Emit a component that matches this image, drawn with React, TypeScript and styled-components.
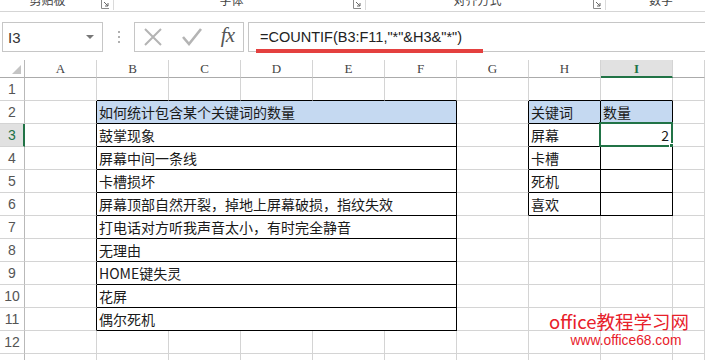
import React from 'react';
import styled, { createGlobalStyle } from 'styled-components';

const GREEN = '#217346';
const GRID = '#d4d4d4';
const BLUE = '#c5d9f1';

const GlobalStyle = createGlobalStyle`
  html, body {
    margin: 0;
    padding: 0;
    background: #fff;
    overflow: hidden;
  }
  body {
    font-family: "Liberation Sans", "Noto Sans CJK SC", sans-serif;
  }
`;

const Page = styled.div`
  position: relative;
  width: 705px;
  height: 360px;
  overflow: hidden;
  background: #fff;
`;

/* ribbon group captions, cut off at the top */
const Ribbon = styled.div`
  display: flex;
  height: 11px;
  border-bottom: 1px solid #d5d5d5;
  overflow: hidden;
`;

const RibbonGroup = styled.div<{ $width: number; $labelShift: number }>`
  position: relative;
  display: flex;
  justify-content: center;
  width: ${(p) => p.$width}px;
  flex-shrink: 0;
  border-right: 1px solid #dadada;
  height: 10px;
  span {
    font-family: "Noto Sans CJK SC", sans-serif;
    font-size: 12px;
    line-height: 12px;
    color: #444;
    margin-top: -6px;
    transform: translateX(${(p) => p.$labelShift}px);
  }
  svg {
    position: absolute;
    right: 3px;
    top: 0;
  }
`;

const Launcher = () => (
  <svg width="9" height="9" viewBox="0 0 9 9">
    <path d="M0.5 -1 V8.5 H8" fill="none" stroke="#8a8a8a" />
    <path d="M3 2 L7 6 M7 3 V6 H4" fill="none" stroke="#666" />
  </svg>
);

const FormulaBar = styled.div`
  display: flex;
  height: 30px;
  margin-top: 10px;
  padding-left: 2px;
`;

const NameBox = styled.div`
  position: relative;
  display: flex;
  align-items: center;
  width: 99px;
  border: 1px solid #c6c6c6;
  padding-left: 5px;
  box-sizing: border-box;
  width: 101px;
  font-family: "Liberation Sans", sans-serif;
  font-size: 15px;
  color: #333;
  &::after {
    content: '';
    position: absolute;
    right: 8px;
    top: 12px;
    border-left: 4px solid transparent;
    border-right: 4px solid transparent;
    border-top: 4px solid #777;
  }
`;

const Grip = styled.div`
  display: flex;
  flex-direction: column;
  justify-content: center;
  align-items: center;
  gap: 3px;
  width: 31px;
  i {
    display: block;
    width: 2px;
    height: 2px;
    background: #b0b0b0;
  }
`;

const ButtonBox = styled.div`
  display: flex;
  align-items: center;
  justify-content: space-between;
  width: 110px;
  box-sizing: border-box;
  border: 1px solid #c6c6c6;
  padding: 0 9px 0 8px;
`;

const Fx = styled.span`
  font-family: "Liberation Serif", serif;
  font-style: italic;
  font-size: 21px;
  color: #555;
  letter-spacing: -1px;
  margin-top: -3px;
`;

const FormulaInput = styled.div`
  position: relative;
  flex: 1;
  margin-left: 4px;
  display: flex;
  align-items: center;
  border: 1px solid #c6c6c6;
  border-right: none;
  padding-left: 11px;
  font-family: "Liberation Sans", sans-serif;
  font-size: 14.5px;
  color: #222;
`;

const Underline = styled.div`
  position: absolute;
  left: 7px;
  top: 26px;
  width: 227px;
  height: 4px;
  background: #e4403f;
`;

const Sheet = styled.div`
  display: grid;
  grid-template-columns: 25px repeat(9, 72px) 1fr;
  grid-template-rows: 18px repeat(13, 23px);
  margin-top: 8px;
`;

const Corner = styled.div`
  position: relative;
  border-right: 1px solid #b9b9b9;
  border-bottom: 1px solid #ababab;
  &::after {
    content: '';
    position: absolute;
    right: 3px;
    bottom: 3px;
    border-left: 9px solid transparent;
    border-bottom: 9px solid #c4c4c4;
  }
`;

const ColHead = styled.div<{ $active?: boolean }>`
  display: flex;
  align-items: center;
  justify-content: center;
  background: ${(p) => (p.$active ? '#e1e1e1' : '#fff')};
  border-right: 1px solid ${GRID};
  border-bottom: ${(p) => (p.$active ? `2px solid ${GREEN}` : '1px solid #ababab')};
  font-family: "Liberation Serif", serif;
  font-size: 13px;
  color: ${(p) => (p.$active ? GREEN : '#444')};
  font-weight: ${(p) => (p.$active ? 'bold' : 'normal')};
  padding-top: 1px;
`;

const RowHead = styled.div<{ $active?: boolean }>`
  display: flex;
  align-items: center;
  justify-content: center;
  background: ${(p) => (p.$active ? '#e1e1e1' : '#fff')};
  border-right: ${(p) => (p.$active ? `2px solid ${GREEN}` : '1px solid #b9b9b9')};
  border-bottom: 1px solid ${GRID};
  font-family: "Liberation Sans", sans-serif;
  font-size: 14px;
  color: ${(p) => (p.$active ? GREEN : '#555')};
  padding-left: ${(p) => (p.$active ? '1px' : '0')};
`;

const Cell = styled.div<{
  $span?: number;
  $right?: boolean;
  $bottom?: boolean;
  $fill?: string;
  $alignEnd?: boolean;
}>`
  position: relative;
  display: flex;
  align-items: center;
  justify-content: ${(p) => (p.$alignEnd ? 'flex-end' : 'flex-start')};
  grid-column: span ${(p) => p.$span || 1};
  background: ${(p) => p.$fill || '#fff'};
  border-right: 1px solid ${(p) => (p.$right ? '#000' : GRID)};
  border-bottom: 1px solid ${(p) => (p.$bottom ? '#000' : GRID)};
  padding: 0 3px 0 2px;
  font-family: "Noto Sans CJK SC", sans-serif;
  font-size: 14px;
  line-height: 22px;
  color: #1a1a1a;
  white-space: nowrap;
  overflow: visible;
`;

const ActiveFrame = styled.div`
  position: absolute;
  left: -2px;
  top: -2px;
  width: 74px;
  height: 25px;
  box-sizing: border-box;
  border: 2px solid ${GREEN};
  pointer-events: none;
  &::after {
    content: '';
    position: absolute;
    right: -5px;
    bottom: -5px;
    width: 5px;
    height: 5px;
    background: ${GREEN};
    border: 1px solid #fff;
  }
`;

const Watermark = styled.div`
  position: absolute;
  left: 549px;
  top: 309px;
  display: flex;
  flex-direction: column;
  align-items: center;
  color: #e8202a;
  b {
    font-family: "Noto Sans CJK SC", sans-serif;
    font-weight: normal;
    font-size: 18.5px;
    line-height: 24px;
  }
  span {
    font-family: "Liberation Sans", sans-serif;
    font-size: 13.8px;
    line-height: 16px;
    margin-left: 14px;
  }
`;

const COLS = ['A', 'B', 'C', 'D', 'E', 'F', 'G', 'H', 'I'];

const listB: Record<number, string> = {
  2: '如何统计包含某个关键词的数量',
  3: '鼓掌现象',
  4: '屏幕中间一条线',
  5: '卡槽损坏',
  6: '屏幕顶部自然开裂，掉地上屏幕破损，指纹失效',
  7: '打电话对方听我声音太小，有时完全静音',
  8: '无理由',
  9: 'HOME键失灵',
  10: '花屏',
  11: '偶尔死机',
};

const listH: Record<number, string> = { 2: '关键词', 3: '屏幕', 4: '卡槽', 5: '死机', 6: '喜欢' };
const listI: Record<number, string> = { 2: '数量', 3: '2' };

function SheetRow({ r }: { r: number }) {
  const inB = r >= 2 && r <= 11;
  const inH = r >= 2 && r <= 6;
  const cells: React.ReactNode[] = [];

  cells.push(<Cell key="A" $right={inB} />);
  if (inB) {
    cells.push(
      <Cell key="B" $span={5} $right $bottom $fill={r === 2 ? BLUE : undefined}>
        {listB[r]}
      </Cell>,
    );
  } else {
    ['B', 'C', 'D', 'E', 'F'].forEach((c) => cells.push(<Cell key={c} $bottom={r === 1} />));
  }
  cells.push(<Cell key="G" $right={inH} />);
  cells.push(
    <Cell key="H" $right={inH} $bottom={r === 1 || inH} $fill={r === 2 ? BLUE : undefined}>
      {listH[r]}
    </Cell>,
  );
  cells.push(
    <Cell key="I" $right={inH} $bottom={r === 1 || inH} $fill={r === 2 ? BLUE : undefined} $alignEnd={r === 3}>
      {listI[r]}
      {r === 3 && <ActiveFrame />}
    </Cell>,
  );
  cells.push(<Cell key="J" />);

  return (
    <>
      <RowHead $active={r === 3}>{r}</RowHead>
      {cells}
    </>
  );
}

export default function App() {
  const rows = Array.from({ length: 13 }, (_, i) => i + 1);
  return (
    <Page>
      <GlobalStyle />
      <Ribbon>
        <RibbonGroup $width={113} $labelShift={-9}>
          <span>剪贴板</span>
          <Launcher />
        </RibbonGroup>
        <RibbonGroup $width={251} $labelShift={-8}>
          <span>字体</span>
          <Launcher />
        </RibbonGroup>
        <RibbonGroup $width={239} $labelShift={-8}>
          <span>对齐方式</span>
          <Launcher />
        </RibbonGroup>
        <RibbonGroup $width={120} $labelShift={-5}>
          <span>数字</span>
        </RibbonGroup>
      </Ribbon>

      <FormulaBar>
        <NameBox>I3</NameBox>
        <Grip>
          <i />
          <i />
          <i />
        </Grip>
        <ButtonBox>
          <svg width="20" height="18" viewBox="0 0 20 18">
            <path d="M2 1 L18 17 M18 1 L2 17" stroke="#b4b4b4" strokeWidth="2" fill="none" />
          </svg>
          <svg width="22" height="18" viewBox="0 0 22 18">
            <path d="M2 9 L8 16 L20 1" stroke="#b4b4b4" strokeWidth="2.6" fill="none" />
          </svg>
          <Fx>fx</Fx>
        </ButtonBox>
        <FormulaInput>
          =COUNTIF(B3:F11,"*"&amp;H3&amp;"*")
          <Underline />
        </FormulaInput>
      </FormulaBar>

      <Sheet>
        <Corner />
        {COLS.map((c) => (
          <ColHead key={c} $active={c === 'I'}>
            {c}
          </ColHead>
        ))}
        <ColHead />
        {rows.map((r) => (
          <SheetRow key={r} r={r} />
        ))}
      </Sheet>

      <Watermark>
        <b>office教程学习网</b>
        <span>www.office68.com</span>
      </Watermark>
    </Page>
  );
}
